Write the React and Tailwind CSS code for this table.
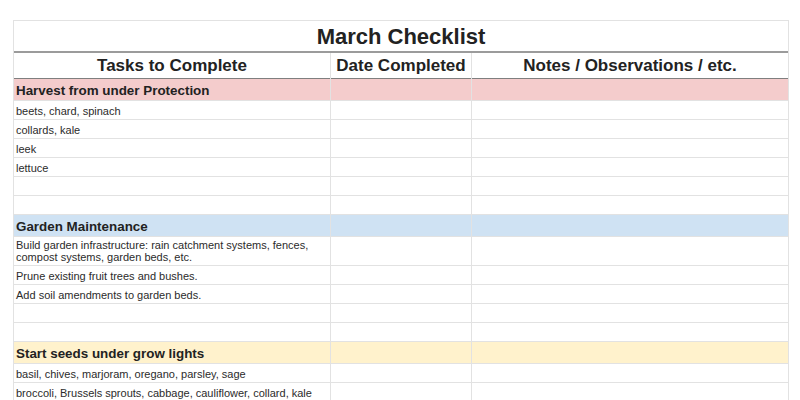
import React from "react";

const cols = "grid grid-cols-[317px_141px_1fr]";

function Row({ h, bg = "", children, bold }) {
  return (
    <div className={`${cols} ${h} ${bg} border-b border-[#e2e2e2]`}>
      <div className={`border-r border-[#e2e2e2] flex pl-[2px] pr-2 ${bold ? "items-center pt-[2px] text-[13.4px] font-bold text-[#222]" : "items-end pb-[2px] text-[11px] leading-[12px] text-[#2b2b2b]"}`}>
        <div>{children}</div>
      </div>
      <div className="border-r border-[#e2e2e2]" />
      <div />
    </div>
  );
}

export default function App() {
  return (
    <div className="w-[800px] h-[400px] overflow-hidden bg-white font-['Liberation_Sans',Arial,sans-serif]">
      <div className="ml-[13px] mt-[20px] w-[776px] border-l border-t border-r border-[#e2e2e2]">
        <div className="h-[32px] border-b-2 border-[#9b9b9b] flex items-center justify-center text-[22px] font-bold text-[#222]">
          March Checklist
        </div>
        <div className={`${cols} h-[26px] border-b border-[#7f7f7f] text-[17px] font-bold text-[#222]`}>
          <div className="border-r border-[#e2e2e2] flex items-center justify-center">Tasks to Complete</div>
          <div className="border-r border-[#e2e2e2] flex items-center justify-center">Date Completed</div>
          <div className="flex items-center justify-center">Notes / Observations / etc.</div>
        </div>
        <Row h="h-[22px]" bg="bg-[#f4cccc]" bold>Harvest from under Protection</Row>
        <Row h="h-[19px]">beets, chard, spinach</Row>
        <Row h="h-[19px]">collards, kale</Row>
        <Row h="h-[19px]">leek</Row>
        <Row h="h-[19px]">lettuce</Row>
        <Row h="h-[19px]" />
        <Row h="h-[19px]" />
        <Row h="h-[22px]" bg="bg-[#cfe2f3]" bold>Garden Maintenance</Row>
        <Row h="h-[29px]">Build garden infrastructure: rain catchment systems, fences,<br />compost systems, garden beds, etc.</Row>
        <Row h="h-[19px]">Prune existing fruit trees and bushes.</Row>
        <Row h="h-[19px]">Add soil amendments to garden beds.</Row>
        <Row h="h-[19px]" />
        <Row h="h-[19px]" />
        <Row h="h-[22px]" bg="bg-[#fff2cc]" bold>Start seeds under grow lights</Row>
        <Row h="h-[19px]">basil, chives, marjoram, oregano, parsley, sage</Row>
        <Row h="h-[19px]">broccoli, Brussels sprouts, cabbage, cauliflower, collard, kale</Row>
        <Row h="h-[19px]" />
      </div>
    </div>
  );
}
